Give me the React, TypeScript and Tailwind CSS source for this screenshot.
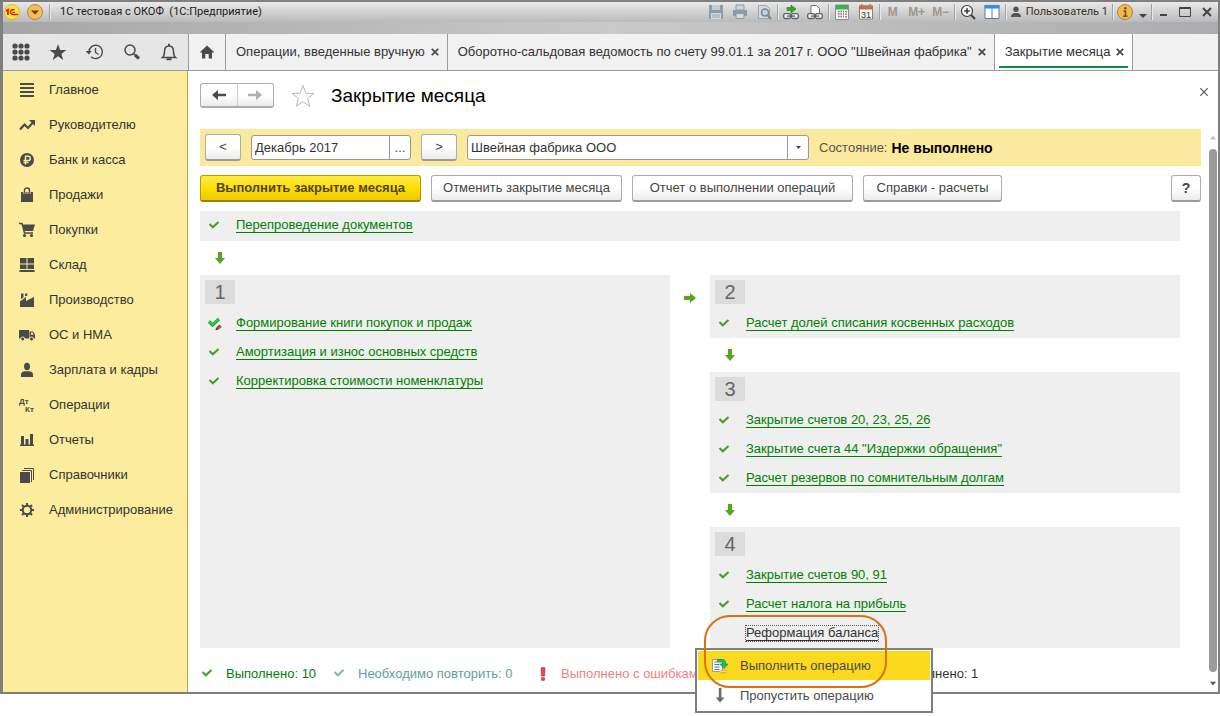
import type { ReactNode } from "react";

type IconProps = { children: ReactNode; size?: string; box?: string };

function Icon({ children, size = "size-4", box = "0 0 16 16" }: IconProps) {
  return (
    <svg viewBox={box} className={`${size} shrink-0`} fill="currentColor" aria-hidden="true">
      {children}
    </svg>
  );
}

/* ---------- title bar ---------- */

const fileTools = [
  {
    label: "Сохранить",
    art: (
      <g>
        <path d="M1 1h14v14H1z" fill="#8b9dab" />
        <path d="M4 1h8v5H4z" fill="#c4ccd2" />
        <path d="M3 9h10v6H3z" fill="#d5d9dc" />
        <path d="M4 11h8M4 13h8" stroke="#9aa8b3" />
      </g>
    ),
  },
  {
    label: "Печать",
    art: (
      <g>
        <path d="M4 1h8v5H4z" fill="#d2d6d9" stroke="#8b9aa6" />
        <path d="M1 6h14v6H1z" fill="#8b9aa6" />
        <path d="M4 9.500h8v5H4z" fill="#d8dbde" stroke="#8b9aa6" />
      </g>
    ),
  },
  {
    label: "Просмотр",
    art: (
      <g fill="none">
        <path d="M2.500 1.500h8l3 3v10h-11z" fill="#d6d9dc" stroke="#9aa7b0" />
        <circle cx="9" cy="8.500" r="3.500" fill="#c6d2d8" stroke="#6f8796" strokeWidth="1.500" />
        <path d="M11.500 11l3.500 4" stroke="#6f8796" strokeWidth="2" />
      </g>
    ),
  },
];

const linkArt = (
  <g fill="none" stroke="#5b636b" strokeWidth="1.300">
    <rect x=".7" y="9.700" width="6.800" height="4.800" rx="1.500" fill="#f4f4f4" />
    <rect x="8.500" y="9.700" width="6.800" height="4.800" rx="1.500" fill="#f4f4f4" />
    <path d="M4 12.100h8" />
  </g>
);

const linkTools = [
  {
    label: "Перейти по ссылке",
    art: (
      <g>
        {linkArt}
        <path d="M4 3.500h4V1l5 4-5 4V6.500H4z" fill="#2fa81f" stroke="#1b7a12" strokeWidth=".6" />
      </g>
    ),
  },
  {
    label: "Получить ссылку",
    art: (
      <g>
        <path d="M4 9.500V1.500h5.500l3 3v5" fill="#fff" stroke="#6b737b" />
        {linkArt}
      </g>
    ),
  },
];

const calcTools = [
  {
    label: "Калькулятор",
    art: (
      <g>
        <path d="M1.500 1h13v14.500h-13z" fill="#f3f3f3" stroke="#8a8f94" />
        <path d="M2 1h12v4.500H2z" fill="#3fae4b" />
        <path d="M4 7.500h6M4 10h6M4 12.500h6" stroke="#777" strokeWidth="1.300" strokeDasharray="1.500 1" />
        <path d="M12 7v6.500" stroke="#d4503e" strokeWidth="1.500" strokeDasharray="1.500 1" />
      </g>
    ),
  },
  {
    label: "Календарь",
    art: (
      <g>
        <path d="M1.500 2h13v13h-13z" fill="#fafafa" stroke="#9b7e68" />
        <path d="M1 1.500h14v4H1z" fill="#c4713c" />
        <path d="M4 0v3M12 0v3" stroke="#8a8a8a" strokeWidth="1.500" />
        <text x="8" y="13.500" fontSize="9" textAnchor="middle" fontFamily="Liberation Sans, sans-serif" fill="#333">
          31
        </text>
      </g>
    ),
  },
];

const viewTools = [
  {
    label: "Масштаб",
    art: (
      <g fill="none" stroke="#3d3d3d">
        <circle cx="7" cy="7" r="5.500" fill="#f6f6f6" strokeWidth="1.200" />
        <path d="M4.200 7h5.600M7 4.200v5.600" strokeWidth="1.700" />
        <path d="M11 11l4 4" strokeWidth="2" />
      </g>
    ),
  },
  {
    label: "Окна",
    art: (
      <g>
        <path d="M1 1.500h14v13H1z" fill="#fff" stroke="#5b7c9b" />
        <path d="M.5 1h15v3.500H.5z" fill="#2f8fe0" />
        <path d="M8 4v11" stroke="#5b7c9b" />
      </g>
    ),
  },
];

function ToolGroup({ tools }: { tools: { label: string; art: ReactNode }[] }) {
  return (
    <div className="flex px-px">
      {tools.map((tool) => (
        <button key={tool.label} type="button" aria-label={tool.label} className="flex w-6 justify-center">
          <Icon>{tool.art}</Icon>
        </button>
      ))}
    </div>
  );
}

function Separator() {
  return <span className="h-4 w-px shrink-0 bg-[#a3a3a3] shadow-[1px_0_0_#e9e9e9]" />;
}

function TitleBar() {
  return (
    <header className="bg-linear-to-r from-[#a6a6a6] via-[#c9c9c9] to-[#acacae] pb-3">
      <div className="flex h-5 items-center bg-linear-to-b from-[#e9e9e9] to-[#b9babb]">
        <span className="pl-px">
          <svg viewBox="0 0 16 16" className="size-4" aria-hidden="true">
            <circle cx="8" cy="8" r="7.500" fill="#ffe53b" stroke="#e8b62c" />
            <path d="M2 7l2-1.300V11" fill="none" stroke="#d9161c" strokeWidth="1.700" />
            <path d="M10.500 6.200a2.400 2.400 0 1 0-1.800 4.200H14" fill="none" stroke="#d9161c" strokeWidth="1.500" />
            <path d="M10.800 8.400H8.500" fill="none" stroke="#d9161c" strokeWidth="1.200" />
          </svg>
        </span>
        <button type="button" aria-label="Главное меню" className="mr-1.5 ml-[7px] flex">
          <svg viewBox="0 0 16 16" className="size-4">
            <circle cx="8" cy="8" r="7.500" fill="#f9bb55" stroke="#b98746" />
            <path d="M4 6.500h8L8 10.500z" fill="#5c3d14" />
          </svg>
        </button>
        <Separator />
        <span className="ml-2.5 font-[Roboto,sans-serif] text-[11px] whitespace-pre text-[#1a1a1a]">
          {"1С тестовая с ОКОФ  (1С:Предприятие)"}
        </span>
        <div className="ml-auto flex items-center">
          <ToolGroup tools={fileTools} />
          <Separator />
          <ToolGroup tools={linkTools} />
          <Separator />
          <ToolGroup tools={calcTools} />
          <Separator />
          <div className="flex px-px text-xs font-bold text-[#a0958c]">
            <button type="button" className="w-6 text-center">M</button>
            <button type="button" className="w-6 text-center">M+</button>
            <button type="button" className="w-6 text-center">M−</button>
          </div>
          <Separator />
          <ToolGroup tools={viewTools} />
          <Separator />
          <button type="button" className="flex items-center gap-1 px-1 font-[Roboto,sans-serif] text-[11px] text-[#3a2f1c]">
            <Icon size="size-3" box="0 0 12 12">
              <circle cx="6" cy="3.200" r="2.700" fill="#555" />
              <path d="M1 11c0-3 2-4 5-4s5 1 5 4z" fill="#555" />
            </Icon>
            Пользователь 1
          </button>
          <Separator />
          <button type="button" aria-label="Справка" className="flex items-center gap-1.5 pr-1 pl-1">
            <svg viewBox="0 0 16 16" className="size-4">
              <circle cx="8" cy="8" r="7.500" fill="#f6b84e" stroke="#a8854b" />
              <path d="M6.500 7H8.500v5M6 12.200h4.500" fill="none" stroke="#6a5428" strokeWidth="1.600" />
              <circle cx="8.300" cy="4.200" r="1.200" fill="#6a5428" />
            </svg>
            <svg viewBox="0 0 8 12" className="h-3 w-2">
              <path d="M0 8h8l-4 4z" fill="#444" />
            </svg>
          </button>
          <Separator />
          <button type="button" aria-label="Свернуть" className="flex w-[22px] justify-center">
            <svg viewBox="0 0 12 12" className="size-3"><path d="M3 9h7" stroke="#444" strokeWidth="2" /></svg>
          </button>
          <button type="button" aria-label="Развернуть" className="flex w-[22px] justify-center">
            <svg viewBox="0 0 12 12" className="size-3"><path d="M.5 1.500h11v9H.5zM.5 2.500h11" fill="none" stroke="#444" /></svg>
          </button>
          <button type="button" aria-label="Закрыть" className="flex w-[22px] justify-center">
            <svg viewBox="0 0 12 12" className="size-3"><path d="M2 2l8 8M10 2l-8 8" stroke="#444" strokeWidth="2" /></svg>
          </button>
        </div>
      </div>
    </header>
  );
}

/* ---------- tab strip ---------- */

const quickTools = [
  {
    label: "Меню функций",
    art: (
      <g>
        {[3, 9, 15].map((y) => [3, 9, 15].map((x) => <circle key={`${x}-${y}`} cx={x} cy={y} r="2.600" />))}
      </g>
    ),
  },
  { label: "Избранное", art: <path d="M9 1l2.100 5.900 6.300.2-5 3.800 1.800 6L9 13.300l-5.200 3.600 1.800-6-5-3.800 6.300-.2z" /> },
  {
    label: "История",
    art: (
      <g fill="none" stroke="currentColor" strokeWidth="1.400">
        <path d="M3 9.500V9a6.700 6.700 0 1 1 2 4.700" />
        <path d="M9.500 5v4.500l3 2" />
        <path d="M-.2 8h6L2.800 11.500z" fill="currentColor" stroke="none" />
      </g>
    ),
  },
  {
    label: "Поиск",
    art: (
      <g fill="none" stroke="currentColor">
        <circle cx="7" cy="7" r="5" strokeWidth="1.500" />
        <path d="M10.500 10.500l2 2" strokeWidth="1.500" />
        <path d="M12 12l4 3.500" strokeWidth="3" />
      </g>
    ),
  },
  {
    label: "Оповещения",
    art: (
      <g fill="none" stroke="currentColor" strokeWidth="1.500">
        <path d="M2.500 14.500h13c-2-1.500-2-3-2-6 0-3.500-1.500-5.500-4.500-5.500S4.500 5 4.500 8.500c0 3 0 4.500-2 6z" />
        <path d="M9 3V.8M6.500 16.300h5" strokeWidth="2" />
      </g>
    ),
  },
];

const tabs = [
  { title: "Операции, введенные вручную", active: false },
  { title: 'Оборотно-сальдовая ведомость по счету 99.01.1 за 2017 г. ООО "Швейная фабрика"', active: false },
  { title: "Закрытие месяца", active: true },
];

function TabStrip() {
  return (
    <div className="flex h-[37px] border-b border-[#9c9c9c] bg-[#f1f1f1]">
      <div className="flex w-[186px] shrink-0 border-r border-[#9c9c9c] bg-[#e6e6e6] pr-px">
        {quickTools.map((tool) => (
          <button key={tool.label} type="button" aria-label={tool.label} className="flex flex-1 items-center justify-center text-[#4a4a4a]">
            <Icon size="size-[18px]" box="0 0 18 18">{tool.art}</Icon>
          </button>
        ))}
      </div>
      <button type="button" aria-label="Начальная страница" className="flex w-[37px] shrink-0 items-center justify-center border-r border-[#9c9c9c] text-[#4a4a4a]">
        <Icon>
          <path d="M8 1.500l7.500 7H13V14.500H9.700V10H6.300v4.500H3V8.500H.5z" />
        </Icon>
      </button>
      {tabs.map((tab) => (
        <div
          key={tab.title}
          className={
            tab.active
              ? "flex flex-col border-r border-[#9c9c9c] bg-white px-1"
              : "flex flex-col border-r border-[#9c9c9c] px-1"
          }
        >
          <div className="flex flex-1 items-center gap-1.5 pt-1 pr-1 pl-1.5">
            <button type="button" className="whitespace-nowrap text-[#333]">{tab.title}</button>
            <button type="button" aria-label="Закрыть вкладку" className="text-[#4a4a4a]">
              <svg viewBox="0 0 8 8" className="size-2"><path d="M.8.8l6.400 6.400M7.200.8L.8 7.200" stroke="currentColor" strokeWidth="1.800" /></svg>
            </button>
          </div>
          <span className={tab.active ? "mb-0.5 h-0.5 bg-[#009646]" : "mb-0.5 h-0.5"} />
        </div>
      ))}
    </div>
  );
}

/* ---------- sidebar ---------- */

const sections: { title: string; art: ReactNode }[] = [
  { title: "Главное", art: <path d="M1 1h14v2H1zM1 5h14v2H1zM1 9h14v2H1zM1 13h14v2H1z" /> },
  {
    title: "Руководителю",
    art: (
      <g>
        <path d="M1 12.500l4.500-5 3.500 3.500 4.500-5" fill="none" stroke="currentColor" strokeWidth="2.200" />
        <path d="M10 3h6v6z" />
      </g>
    ),
  },
  {
    title: "Банк и касса",
    art: (
      <g>
        <circle cx="8" cy="8" r="7" />
        <path d="M6.500 12.500V4.300h2.700a2 2 0 0 1 0 4.200H4.500M4.500 10.500h5" fill="none" stroke="#fbec9e" strokeWidth="1.400" />
      </g>
    ),
  },
  {
    title: "Продажи",
    art: (
      <g>
        <path d="M2 5h12v10H2z" />
        <path d="M5.500 7V3.500c0-1.700 1-2.500 2.500-2.500s2.500.8 2.500 2.500V7" fill="none" stroke="currentColor" strokeWidth="1.400" />
        <path d="M4.800 5v2M11.200 5v2M7 5v2M9 5v2" stroke="#fbec9e" strokeWidth=".8" />
      </g>
    ),
  },
  {
    title: "Покупки",
    art: (
      <g>
        <path d="M3.500 2.500H16L14 9H5.500z" />
        <path d="M0 1.500h3l2.500 9.500H14" fill="none" stroke="currentColor" strokeWidth="1.400" />
        <circle cx="5.500" cy="13.500" r="1.600" />
        <circle cx="12.500" cy="13.500" r="1.600" />
      </g>
    ),
  },
  { title: "Склад", art: <path d="M1 1h6.500v5.500H1zM8.500 1H15v5.500H8.500zM1 7.500h6.500V12H1zM8.500 7.500H15V12H8.500zM.5 13h15v2H.5z" /> },
  { title: "Производство", art: <path d="M1 15V9.500L7 5v4l8-4v10zM2 7V1.500h2.500V5.500zM6 4V1.500h2.500L8 4z" /> },
  {
    title: "ОС и НМА",
    art: (
      <g>
        <path d="M0 3h10v8.500H0z" />
        <path d="M10.500 4.500H14l2 3v4h-5.500z" />
        <path d="M12 5.500h1.500l1.300 2.200H12z" fill="#fbec9e" />
        <circle cx="3.700" cy="12" r="2" stroke="#fbec9e" />
        <circle cx="12.500" cy="12" r="2" stroke="#fbec9e" />
      </g>
    ),
  },
  {
    title: "Зарплата и кадры",
    art: (
      <g>
        <ellipse cx="8" cy="4.500" rx="3" ry="3.700" />
        <path d="M2 15v-2.500C2 10.500 4 9.300 6 9.300h4c2 0 4 1.200 4 3.200V15z" />
      </g>
    ),
  },
  {
    title: "Операции",
    art: (
      <g fontFamily="Liberation Sans, sans-serif" fontWeight="bold" fontSize="8">
        <text x="0" y="6.500">Дт</text>
        <text x="6" y="14.500">Кт</text>
      </g>
    ),
  },
  { title: "Отчеты", art: <path d="M2 4h3v8.500H2zM6.500 7h3v5.500h-3zM11 2h3v10.500h-3zM1 12.500h14V14H1z" /> },
  {
    title: "Справочники",
    art: (
      <g>
        <path d="M1 5h10v11H1z" />
        <path d="M3 3.500h9.500V15M5 1.500h9.500V13" fill="none" stroke="currentColor" />
      </g>
    ),
  },
  {
    title: "Администрирование",
    art: (
      <g fill="none" stroke="currentColor">
        <circle cx="8" cy="8" r="4.200" strokeWidth="2" />
        <path d="M8 1v2.500M8 12.500V15M1 8h2.500M12.500 8H15M3 3l1.800 1.800M11.200 11.200L13 13M13 3l-1.800 1.800M4.800 11.200L3 13" strokeWidth="2" />
      </g>
    ),
  },
];

function Sidebar() {
  return (
    <nav className="w-[185px] shrink-0 border-r border-[#b5a64f] bg-[#fbec9e]">
      {sections.map((section) => (
        <a key={section.title} href="#" className="flex h-[35px] items-center gap-3.5 pt-0.5 pl-4 text-[#333]">
          <span className="text-[#4a4a4a]"><Icon>{section.art}</Icon></span>
          {section.title}
        </a>
      ))}
    </nav>
  );
}

/* ---------- month closing form ---------- */

const plainButton =
  "h-[27px] rounded-[3px] border border-[#adadad] border-b-2 border-b-[#9b9b9b] bg-linear-to-b from-white from-50% to-[#ebebeb] text-[#444] whitespace-nowrap";

function Check({ color = "#45a01e" }: { color?: string }) {
  return (
    <svg viewBox="0 0 12 12" className="size-3 shrink-0" aria-hidden="true">
      <path d="M1.500 4l3.300 3.300L10.500 2" fill="none" stroke={color} strokeWidth="2" />
    </svg>
  );
}

function CheckEdited() {
  return (
    <svg viewBox="0 0 14 14" className="-mr-0.5 size-3.5 shrink-0" aria-hidden="true">
      <path d="M1 4.500l3.500 3.500L11 2" fill="none" stroke="#17a32a" strokeWidth="3.200" />
      <path d="M1.500 4.500l3 3L10.500 2.200" fill="none" stroke="#35d34a" strokeWidth="1.400" />
      <path d="M7.500 13l1-3 3-2.500 2.300 2.300-3 2.700z" fill="#8a5a44" />
      <path d="M7.500 13l.8-2 1.400 1.400z" fill="#2c1c14" />
    </svg>
  );
}

function DownArrow() {
  return (
    <div className="flex h-[34px] items-center pl-[15px]">
      <svg viewBox="0 0 10 12" className="h-3 w-2.5" aria-hidden="true">
        <path d="M3 0h4v6h3l-5 6-5-6h3z" fill="#56a61f" />
      </svg>
    </div>
  );
}

function Operation({ title, edited = false }: { title: string; edited?: boolean }) {
  return (
    <li className="flex h-[29px] items-center gap-4 pl-2">
      {edited ? <CheckEdited /> : <Check />}
      <a href="#" className="border-b border-[#008000] leading-[14px] text-[#008000]">{title}</a>
    </li>
  );
}

function Stage({ number, children, grow = false }: { number: number; children: ReactNode; grow?: boolean }) {
  return (
    <section className={grow ? "flex-1 bg-[#efefef] pt-[5px]" : "bg-[#efefef] pt-[5px]"}>
      <h2 className="ml-[5px] flex h-6 w-[30px] items-center justify-center bg-[#dcdcdc] text-xl text-[#666]">{number}</h2>
      <ul className="pt-[5px]">{children}</ul>
    </section>
  );
}

function PendingOperation() {
  return (
    <li className="relative flex h-[29px] items-center pl-[35px]">
      <a href="#" className="border border-dotted border-[#555] leading-[14px] text-[#333]">
        <span className="block border-b border-[#333]">Реформация баланса</span>
      </a>
      <div role="menu" className="absolute top-full -left-[15px] z-10 w-[238px] border-2 border-[#7f7f7f] bg-white p-px text-[#4a4a4a]">
        <button type="button" role="menuitem" className="flex h-[29px] w-full items-center gap-3 bg-[#fbd91f] pl-3.5 whitespace-nowrap">
          <Icon>
            <path d="M.5 1.500h10v12H.5z" fill="#f2f6f8" stroke="#8ea0a8" />
            <path d="M2.500 4h3M2.500 6.500h5M2.500 9h5M2.500 11.500h5" stroke="#66757d" />
            <path d="M5.500 1.500h5c2 0 3 1 3 3V6H16l-4 4.500L8 6h2.500c0-1.500-.5-2-2-2h-3z" fill="#19c06a" stroke="#0b8a48" strokeWidth=".7" />
            <path d="M8.500 11.500h6V15.500h-6z" fill="#e2b62c" />
            <path d="M8.500 13.500h6" stroke="#fbeaa0" />
          </Icon>
          Выполнить операцию
        </button>
        <button type="button" role="menuitem" className="flex h-[30px] w-full items-center gap-3 pt-0.5 pl-3.5 whitespace-nowrap">
          <Icon>
            <path d="M6.800 0h2.600v9.500H12.500L8.100 14.500 3.700 9.500h3.100z" fill="#6a6a6a" />
          </Icon>
          Пропустить операцию
        </button>
      </div>
      <span className="pointer-events-none absolute -top-1 -left-1.5 z-20 h-[73px] w-[183px] rounded-[26px] border-2 border-[#e0700f]" />
    </li>
  );
}

function PageHeader() {
  return (
    <div className="flex items-center pt-3 pr-2.5 pb-[21px] pl-3">
      <div className="flex h-[25px] w-[74px] rounded-[3px] border border-b-2 border-[#adadad] bg-linear-to-b from-white from-50% to-[#ebebeb]">
        <button type="button" aria-label="Назад" className="flex flex-1 items-center justify-center border-r border-[#cfcfcf]">
          <svg viewBox="0 0 14 10" className="h-2.5 w-3.5"><path d="M0 5l6-5v3.700h8v2.600H6V10z" fill="#4a4a4a" /></svg>
        </button>
        <button type="button" aria-label="Вперед" className="flex flex-1 items-center justify-center">
          <svg viewBox="0 0 14 10" className="h-2.5 w-3.5"><path d="M14 5L8 0v3.700H0v2.600h8V10z" fill="#b0b0b0" /></svg>
        </button>
      </div>
      <button type="button" aria-label="Добавить в избранное" className="ml-[17px]">
        <svg viewBox="0 0 24 24" className="size-6">
          <path d="M12 1.500l2.800 7.700 8.200.3-6.400 5 2.200 7.800-6.800-4.500-6.800 4.500 2.200-7.800-6.400-5 8.200-.3z" fill="none" stroke="#b5b9bd" />
        </svg>
      </button>
      <h1 className="ml-4 text-[19px] leading-6 text-black">Закрытие месяца</h1>
      <button type="button" aria-label="Закрыть форму" className="mb-2 ml-auto text-[#555]">
        <svg viewBox="0 0 8 8" className="size-2"><path d="M.3.3l7.400 7.400M7.700.3L.3 7.700" stroke="currentColor" strokeWidth="1.200" /></svg>
      </button>
    </div>
  );
}

function PeriodBar() {
  return (
    <div className="flex h-[37px] items-center bg-[#fbe99e] px-[5px]">
      <button type="button" aria-label="Предыдущий месяц" className={`${plainButton} w-9`}>&lt;</button>
      <div className="ml-2.5 flex h-[25px] w-40 rounded-[3px] border border-[#999] bg-white">
        <input aria-label="Период" defaultValue="Декабрь 2017" className="min-w-0 flex-1 px-[3px] text-[#333] outline-none" />
        <button type="button" aria-label="Выбрать период" className="w-[21px] border-l border-[#999] text-[#444]">...</button>
      </div>
      <button type="button" aria-label="Следующий месяц" className={`${plainButton} ml-2.5 w-9`}>&gt;</button>
      <div className="relative ml-2.5 h-[25px] w-[342px] rounded-[3px] border border-[#999] bg-white">
        <select aria-label="Организация" className="size-full appearance-none px-[3px] text-[#333] outline-none">
          <option>Швейная фабрика ООО</option>
        </select>
        <span className="pointer-events-none absolute inset-y-0 right-0 flex w-[21px] items-center justify-center border-l border-[#999]">
          <svg viewBox="0 0 5 3" className="h-[3px] w-[5px]"><path d="M0 0h5L2.500 3z" fill="#444" /></svg>
        </span>
      </div>
      <p className="ml-2.5 text-[#555]">Состояние:</p>
      <strong className="ml-1 text-sm font-bold text-black">Не выполнено</strong>
    </div>
  );
}

function CommandBar() {
  return (
    <div className="flex gap-2.5 py-[9px]">
      <button
        type="button"
        className="h-[27px] w-[221px] rounded-[3px] border border-b-2 border-[#b39d00] border-b-[#978400] bg-linear-to-b from-[#ffea3d] via-[#ffdf00] to-[#ecca00] font-bold whitespace-nowrap text-[#4d4522]"
      >
        Выполнить закрытие месяца
      </button>
      <button type="button" className={`${plainButton} w-[191px]`}>Отменить закрытие месяца</button>
      <button type="button" className={`${plainButton} w-[221px]`}>Отчет о выполнении операций</button>
      <button type="button" className={`${plainButton} w-[139px]`}>Справки - расчеты</button>
      <button type="button" aria-label="Справка" className={`${plainButton} ml-auto w-[30px] text-sm font-bold`}>?</button>
    </div>
  );
}

function StatusBar() {
  return (
    <div className="flex h-11 items-center pt-2 pl-px whitespace-nowrap">
      <p className="flex w-[132px] items-center gap-[13px] text-[#008000]">
        <Check />
        Выполнено: 10
      </p>
      <p className="flex w-[204px] items-center gap-[13px] text-[#5f9ea0]">
        <Check color="#7fb5b0" />
        Необходимо повторить: 0
      </p>
      <p className="flex w-[332px] items-center gap-3 text-[#f08080]">
        <svg viewBox="0 0 12 14" className="h-3.5 w-3 shrink-0" aria-hidden="true">
          <path d="M4 1C4 0 8 0 8 1L7.700 9H4.300z" fill="#dd4b4b" stroke="#b23434" strokeWidth=".6" />
          <circle cx="6" cy="12" r="1.800" fill="#dd4b4b" stroke="#b23434" strokeWidth=".6" />
        </svg>
        Выполнено с ошибками: 0
      </p>
      <p className="pl-2 text-[#333]">Не выполнено: 1</p>
    </div>
  );
}

function ScrollTrack() {
  return (
    <div className="flex w-[17px] shrink-0 flex-col items-end gap-[9px] py-1.5 pr-px" aria-hidden="true">
      <svg viewBox="0 0 8 5" className="mr-px h-[5px] w-1.5"><path d="M4 0l4 5H0z" fill="#bdbdbd" /></svg>
      <span className="w-2 flex-1 rounded-full bg-[#9a9a9a]" />
      <svg viewBox="0 0 8 5" className="mr-px h-[5px] w-1.5"><path d="M4 5l4-5H0z" fill="#555" /></svg>
    </div>
  );
}

export default function App() {
  return (
    <div className="min-h-screen bg-white font-['Liberation_Sans',Arial,sans-serif] text-[13px]">
      <div className="border-2 border-l-3 border-[#7f7f7f]">
        <TitleBar />
        <TabStrip />
        <div className="flex">
          <Sidebar />
          <main className="min-w-0 flex-1">
            <PageHeader />
            <div className="flex">
              <div className="min-w-0 flex-1 pl-3">
                <PeriodBar />
                <CommandBar />
                <div className="pr-[21px]">
                  <ul className="bg-[#efefef] pb-px">
                    <Operation title="Перепроведение документов" />
                  </ul>
                  <DownArrow />
                  <div className="flex">
                    <div className="flex flex-1 flex-col">
                      <Stage number={1} grow>
                        <Operation title="Формирование книги покупок и продаж" edited />
                        <Operation title="Амортизация и износ основных средств" />
                        <Operation title="Корректировка стоимости номенклатуры" />
                      </Stage>
                    </div>
                    <div className="flex w-10 justify-center pt-[18px]">
                      <svg viewBox="0 0 12 10" className="h-2.5 w-3" aria-hidden="true">
                        <path d="M0 3v4h6v3l6-5-6-5v3z" fill="#56a61f" />
                      </svg>
                    </div>
                    <div className="flex-1">
                      <Stage number={2}>
                        <Operation title="Расчет долей списания косвенных расходов" />
                      </Stage>
                      <DownArrow />
                      <Stage number={3}>
                        <Operation title="Закрытие счетов 20, 23, 25, 26" />
                        <Operation title='Закрытие счета 44 "Издержки обращения"' />
                        <Operation title="Расчет резервов по сомнительным долгам" />
                      </Stage>
                      <DownArrow />
                      <Stage number={4}>
                        <Operation title="Закрытие счетов 90, 91" />
                        <Operation title="Расчет налога на прибыль" />
                        <PendingOperation />
                      </Stage>
                    </div>
                  </div>
                </div>
                <StatusBar />
              </div>
              <ScrollTrack />
            </div>
          </main>
        </div>
      </div>
    </div>
  );
}
